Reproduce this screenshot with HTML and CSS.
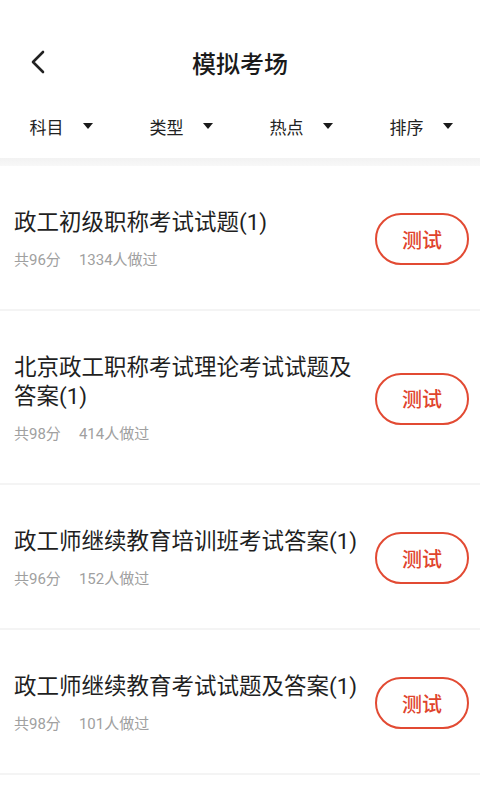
FILE: index.html
```html
<!DOCTYPE html>
<html lang="zh-CN">
<head>
    <meta charset="UTF-8">
    <meta name="viewport" content="width=device-width, initial-scale=1.0">
    <title>模拟考场</title>
    <link rel="stylesheet" href="styles.css">
</head>
<body>
    <div class="page">
        <div class="status-space"></div>
        <div class="navbar">
            <span class="back">
                <svg width="16" height="24" viewBox="0 0 16 24">
                    <path d="M13 2 L3 12 L13 22" fill="none" stroke="#222" stroke-width="2.6" stroke-linecap="round" stroke-linejoin="round"/>
                </svg>
            </span>
            <h1>模拟考场</h1>
        </div>
        <div class="filters">
            <div class="filter">科目<span class="caret"></span></div>
            <div class="filter">类型<span class="caret"></span></div>
            <div class="filter">热点<span class="caret"></span></div>
            <div class="filter">排序<span class="caret"></span></div>
        </div>
        <div class="divider"></div>
        <ul class="list">
            <li class="item">
                <div class="info">
                    <div class="title">政工初级职称考试试题(1)</div>
                    <div class="meta"><span>共96分</span><span>1334人做过</span></div>
                </div>
                <button class="test-btn">测试</button>
            </li>
            <li class="item">
                <div class="info">
                    <div class="title">北京政工职称考试理论考试试题及答案(1)</div>
                    <div class="meta"><span>共98分</span><span>414人做过</span></div>
                </div>
                <button class="test-btn">测试</button>
            </li>
            <li class="item">
                <div class="info">
                    <div class="title">政工师继续教育培训班考试答案(1)</div>
                    <div class="meta"><span>共96分</span><span>152人做过</span></div>
                </div>
                <button class="test-btn">测试</button>
            </li>
            <li class="item">
                <div class="info">
                    <div class="title">政工师继续教育考试试题及答案(1)</div>
                    <div class="meta"><span>共98分</span><span>101人做过</span></div>
                </div>
                <button class="test-btn">测试</button>
            </li>
        </ul>
    </div>
</body>
</html>
```

FILE: styles.css
```css
body {
    margin: 0;
    background: #fff;
    font-family: Roboto, "Noto Sans CJK SC", sans-serif;
    color: #1f1f1f;
}
.page {
    width: 480px;
    height: 800px;
    overflow: hidden;
}
.status-space {
    height: 30px;
}
.navbar {
    height: 64px;
    display: flex;
    align-items: center;
    justify-content: center;
    position: relative;
}
.back {
    position: absolute;
    left: 30px;
    top: 20px;
    display: flex;
}
.navbar h1 {
    margin: 0;
    font-size: 24px;
    font-weight: 500;
    color: #1a1a1a;
}
.filters {
    height: 64px;
    display: grid;
    grid-template-columns: repeat(4, 1fr);
}
.filter {
    display: flex;
    align-items: center;
    justify-content: center;
    font-size: 17px;
    color: #222;
    padding-left: 2px;
}
.caret {
    margin-left: 19px;
    width: 0;
    height: 0;
    border-left: 5px solid transparent;
    border-right: 5px solid transparent;
    border-top: 6px solid #1a1a1a;
}
.divider {
    height: 8px;
    background: linear-gradient(#f2f2f2, #f8f8f8);
}
.list {
    list-style: none;
    margin: 0;
    padding: 0;
}
.item {
    display: flex;
    align-items: center;
    gap: 10px;
    padding: 42px 11px 39px 14px;
    border-bottom: 2px solid #f4f4f4;
}
.info {
    flex: 1;
    min-width: 0;
}
.title {
    font-size: 22.5px;
    line-height: 29px;
    color: #1f1f1f;
}
.meta {
    margin-top: 13px;
    font-size: 15px;
    line-height: 20px;
    color: #a0a0a0;
    display: flex;
    gap: 18px;
}
.test-btn {
    flex-shrink: 0;
    width: 94px;
    height: 52px;
    border: 2px solid #e24a33;
    border-radius: 26px;
    background: #fff;
    color: #e0432c;
    font-family: "Noto Sans CJK SC", sans-serif;
    font-size: 20px;
    font-weight: 500;
    padding: 0;
}
```
